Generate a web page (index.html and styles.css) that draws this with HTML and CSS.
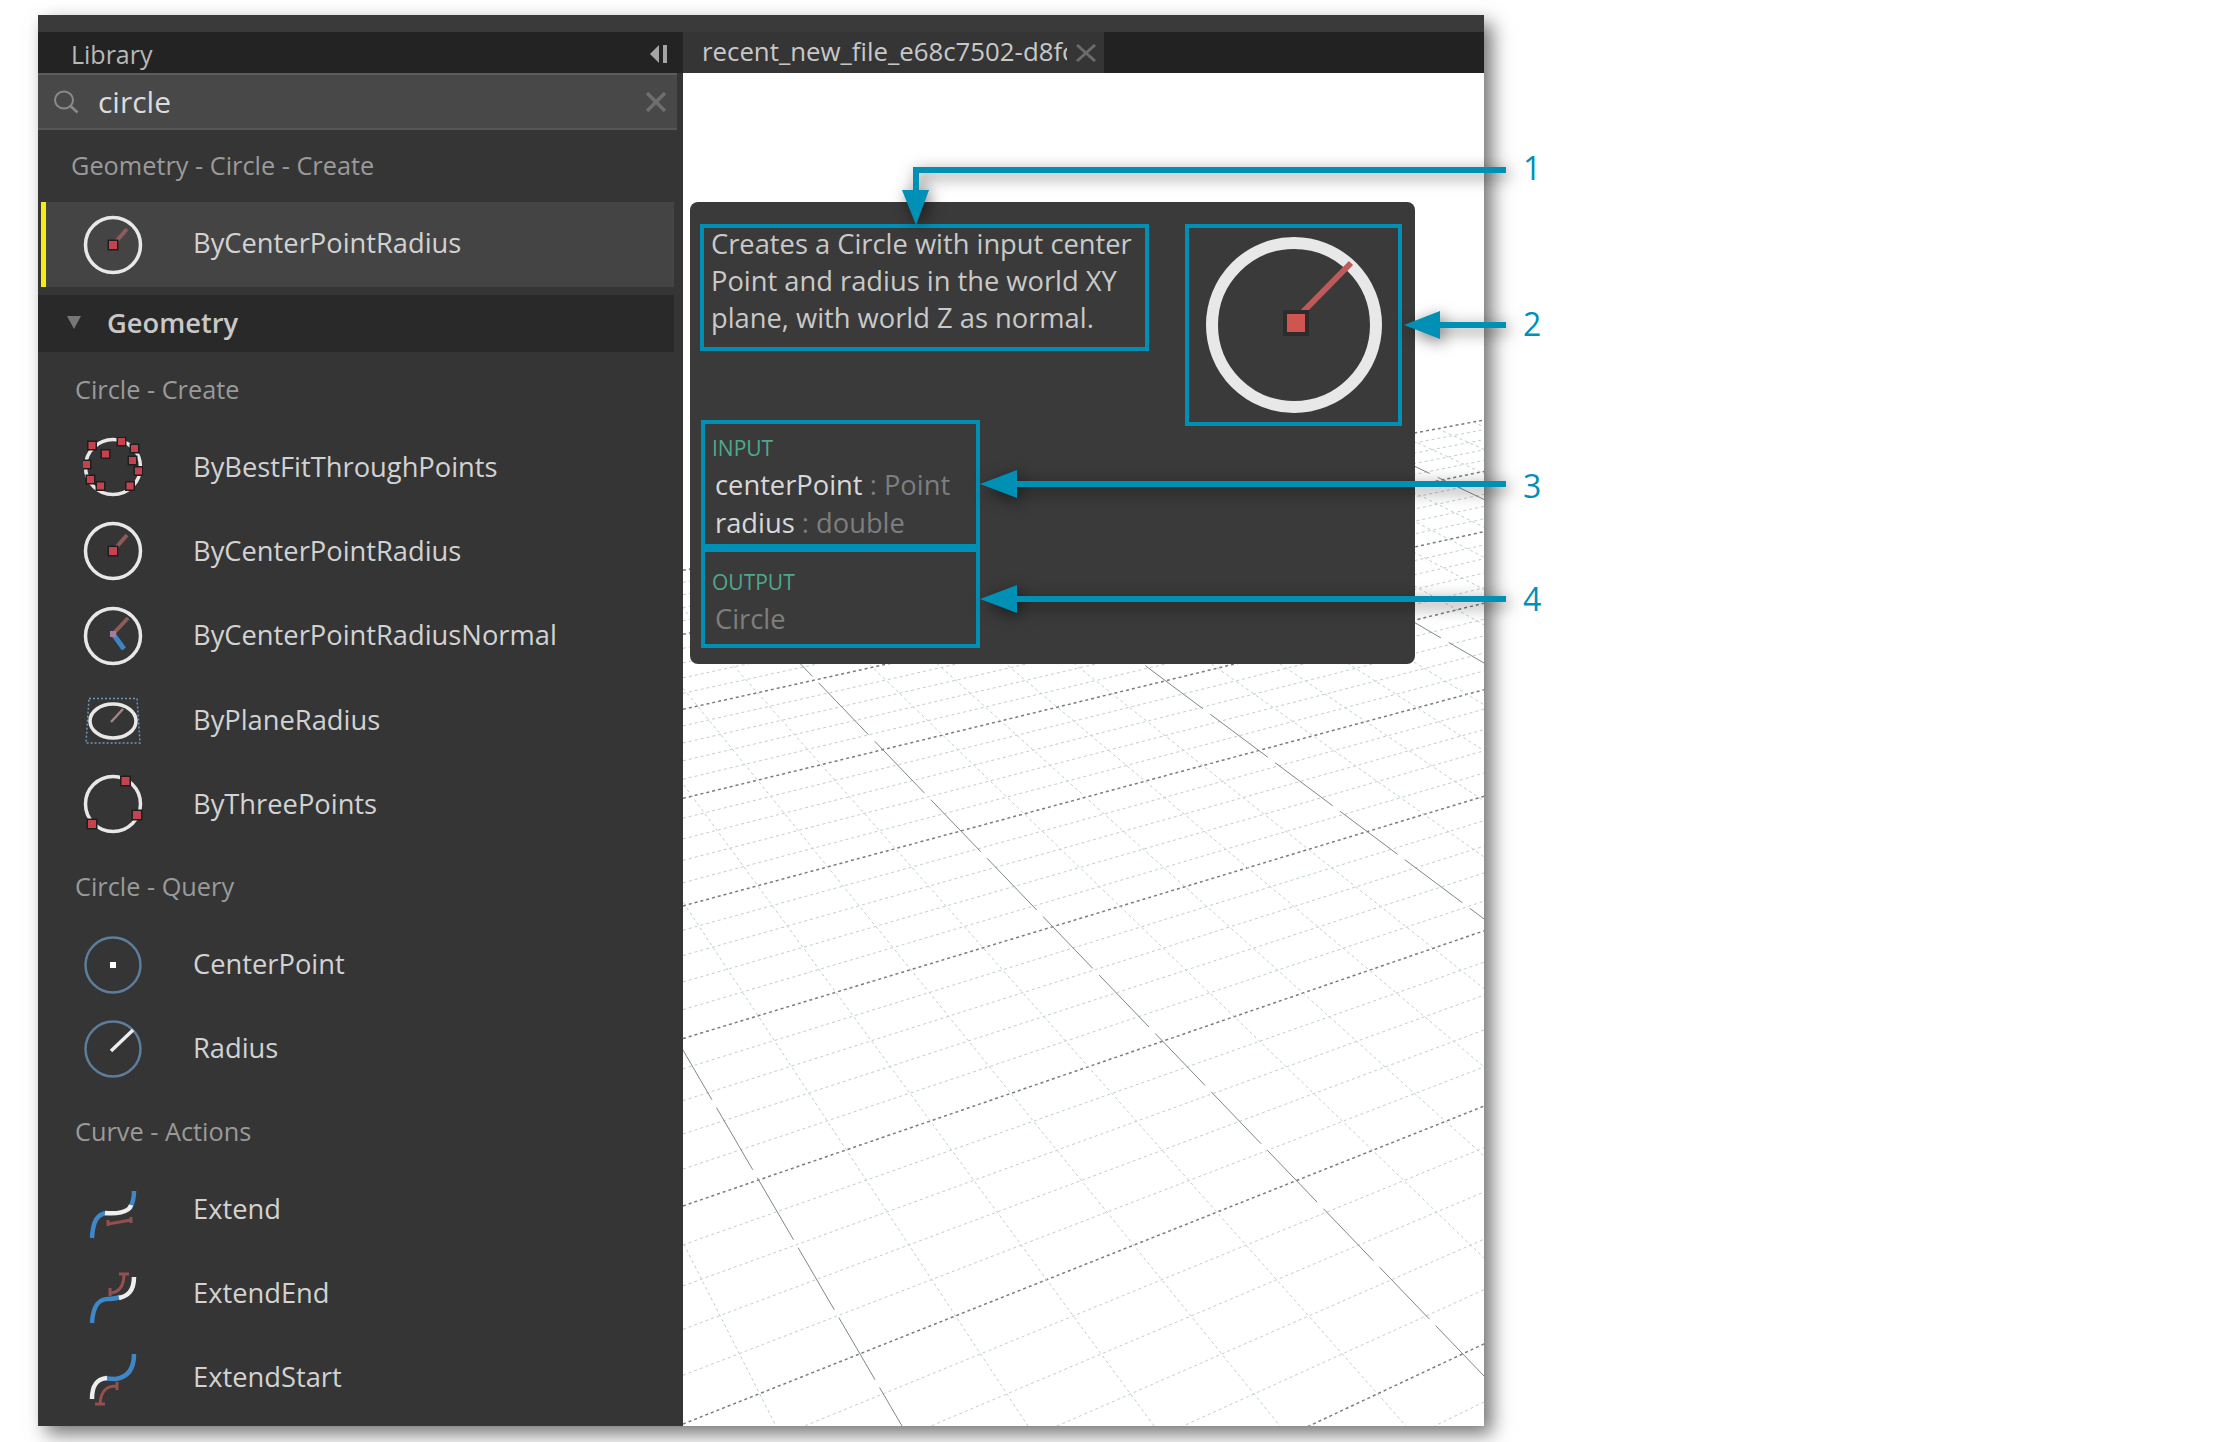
FILE: index.html
```html
<!DOCTYPE html>
<html lang="en">
<head>
    <meta charset="UTF-8">
    <title>Library search tooltip</title>
    <link rel="stylesheet" href="styles.css">
</head>
<body>
    <div class="window">
        <div class="titlebar"></div>
        <div class="panes">
            <aside class="library">
                <div class="library-bar">
                    <span>Library</span>
                    <svg class="collapse" width="20" height="20" viewBox="0 0 20 20"><path d="M11 1v18L2 10z" fill="#a5a5a5"/><rect x="15" y="1" width="4" height="18" fill="#a5a5a5"/></svg>
                </div>
                <div class="search">
                    <svg width="28" height="24" viewBox="0 0 28 24"><ellipse cx="12" cy="10" rx="9" ry="8.5" fill="none" stroke="#8a8a8a" stroke-width="2"/><path d="M18.500 16l7 6.500" stroke="#8a8a8a" stroke-width="2.500"/></svg>
                    <span class="search-text">circle</span>
                    <svg class="search-clear" width="22" height="20" viewBox="0 0 22 20"><path d="M2 1l18 18M20 1L2 19" stroke="#6e6e6e" stroke-width="3.500"/></svg>
                </div>

                <div class="result-label">Geometry - Circle - Create</div>
                <div class="item selected">
                    <svg class="icon" viewBox="0 0 60 60"><circle cx="30" cy="30" r="27.500" class="ring"/><path d="M30 30L44 14" class="arm"/><rect x="26" y="26" width="8" height="8" class="pt"/></svg>
                    <span>ByCenterPointRadius</span>
                </div>

                <div class="category"><i class="caret"></i>Geometry</div>

                <div class="group-label">Circle - Create</div>
                <div class="item">
                    <svg class="icon" viewBox="0 0 60 60">
                        <circle cx="30" cy="30" r="27.500" class="ring"/>
                        <rect x="5.500" y="5" width="7" height="7" class="pt"/><rect x="19" y="13.500" width="7" height="7" class="pt"/><rect x="35" y="1" width="7" height="7" class="pt"/><rect x="48" y="8" width="7" height="7" class="pt"/><rect x="46" y="20" width="7" height="7" class="pt"/><rect x="52" y="30.500" width="7" height="7" class="pt"/><rect x="0" y="24" width="7" height="7" class="pt"/><rect x="4" y="39" width="7" height="7" class="pt"/><rect x="14" y="45.500" width="7" height="7" class="pt"/><rect x="43.500" y="45.500" width="7" height="7" class="pt"/>
                    </svg>
                    <span>ByBestFitThroughPoints</span>
                </div>
                <div class="item">
                    <svg class="icon" viewBox="0 0 60 60"><circle cx="30" cy="30" r="27.500" class="ring"/><path d="M30 30L44 14" class="arm"/><rect x="26" y="26" width="8" height="8" class="pt"/></svg>
                    <span>ByCenterPointRadius</span>
                </div>
                <div class="item">
                    <svg class="icon" viewBox="0 0 60 60"><circle cx="30" cy="30" r="27.500" class="ring"/><path d="M30 28L45 12" class="arm"/><path d="M30 28L41 43" class="arm-blue"/><rect x="27" y="25" width="6" height="6" fill="#a87ba0"/></svg>
                    <span>ByCenterPointRadiusNormal</span>
                </div>
                <div class="item">
                    <svg class="icon" viewBox="0 0 60 60"><path d="M6 8.500H54L57 53H3z" class="plane"/><ellipse cx="30" cy="31" rx="23" ry="17" class="ring"/><path d="M28 32L40 19" class="arm-pale"/></svg>
                    <span>ByPlaneRadius</span>
                </div>
                <div class="item">
                    <svg class="icon" viewBox="0 0 60 60"><circle cx="30" cy="30" r="27.500" class="ring"/><rect x="38.500" y="3" width="8" height="8" class="pt"/><rect x="50" y="37" width="8" height="8" class="pt"/><rect x="5" y="46" width="8" height="8" class="pt"/></svg>
                    <span>ByThreePoints</span>
                </div>

                <div class="group-label">Circle - Query</div>
                <div class="item">
                    <svg class="icon" viewBox="0 0 60 60"><circle cx="30" cy="30" r="27.500" class="ring-blue"/><rect x="27" y="27" width="6" height="6" fill="#fff"/></svg>
                    <span>CenterPoint</span>
                </div>
                <div class="item">
                    <svg class="icon" viewBox="0 0 60 60"><circle cx="30" cy="30" r="27.500" class="ring-blue"/><path d="M28 32L50 11" stroke="#eee" stroke-width="3.500"/></svg>
                    <span>Radius</span>
                </div>

                <div class="group-label">Curve - Actions</div>
                <div class="item">
                    <svg class="icon" viewBox="0 0 60 60"><path d="M9 59C10 42 14 35 24 34" class="curve-blue"/><path d="M47 29C50 24 51 18 51 12" class="curve-blue"/><path d="M22 34C32 35 46 34 48 26" class="curve-white"/><path d="M25 45L48 41M25 41v6M48 38v6" class="bracket"/></svg>
                    <span>Extend</span>
                </div>
                <div class="item">
                    <svg class="icon" viewBox="0 0 60 60"><path d="M9 59C10 42 15 35 25 35C30 35 34 34 38 33" class="curve-blue"/><path d="M36 34C44 32 51 28 51 13" class="curve-white"/><path d="M28 29C36 28 41 22 41 10M36 10h10M27 24v8" class="bracket"/></svg>
                    <span>ExtendEnd</span>
                </div>
                <div class="item">
                    <svg class="icon" viewBox="0 0 60 60"><path d="M51 6C51 20 45 29 33 31C29 31 26 31 22 30" class="curve-blue"/><path d="M24 30C13 31 9 38 9 51" class="curve-white"/><path d="M34 38C24 38 18 42 17 56M12 56h10M34 34v8" class="bracket"/></svg>
                    <span>ExtendStart</span>
                </div>
            </aside>

            <main class="workspace">
                <div class="tabbar">
                    <div class="tab">
                        <span class="tab-name">recent_new_file_e68c7502-d8fc</span>
                        <svg width="20" height="18" viewBox="0 0 20 18"><path d="M1 1l18 16M19 1L1 17" stroke="#6a6a6a" stroke-width="3"/></svg>
                    </div>
                </div>
                <div class="viewport">
                    <svg id="grid" class="grid" viewBox="683 73 801 1353"></svg>

                    <div class="tooltip">
                        <div class="tooltip-left">
                            <div class="box desc">
                                <p>Creates a Circle with input center Point and radius in the world XY plane, with world Z as normal.</p>
                            </div>
                            <div class="box ports inputs">
                                <div class="port-title">INPUT</div>
                                <div class="port">centerPoint <em>: Point</em></div>
                                <div class="port">radius <em>: double</em></div>
                            </div>
                            <div class="box ports outputs">
                                <div class="port-title">OUTPUT</div>
                                <div class="port"><em>Circle</em></div>
                            </div>
                        </div>
                        <div class="box preview">
                            <svg width="180" height="180" viewBox="0 0 180 180"><circle cx="90" cy="90" r="82" fill="none" stroke="#e8e8e8" stroke-width="12"/><path d="M92 84L147 28" stroke="#c05a5a" stroke-width="6"/><rect x="79" y="75" width="26" height="26" fill="#2c2c2c"/><rect x="83" y="79" width="18" height="18" fill="#cf5550"/></svg>
                        </div>
                    </div>
                </div>
            </main>
        </div>
    </div>

    <svg class="callouts" width="2218" height="1442" viewBox="0 0 2218 1442">
        <g class="leaders">
            <path d="M916 197V170H1506" class="leader"/>
            <path d="M902 190H929L916 225z" class="head"/>
            <path d="M1436 325H1506" class="leader"/>
            <path d="M1404 325L1440 311V339z" class="head"/>
            <path d="M1012 484H1506" class="leader"/>
            <path d="M980 484L1017 470V498z" class="head"/>
            <path d="M1012 599H1506" class="leader"/>
            <path d="M980 599L1017 585V613z" class="head"/>
        </g>
        <text x="1523" y="180">1</text>
        <text x="1523" y="336">2</text>
        <text x="1523" y="498">3</text>
        <text x="1523" y="611">4</text>
    </svg>

    <script src="grid.js"></script>
</body>
</html>
```

FILE: styles.css
```css
body {
    margin: 0;
    width: 2218px;
    height: 1442px;
    overflow: hidden;
    background: #fff;
    font-family: "Open Sans", sans-serif;
    position: relative;
}
.window {
    position: absolute;
    left: 38px;
    top: 15px;
    width: 1446px;
    height: 1411px;
    display: flex;
    flex-direction: column;
    background: #3a3a3a;
    box-shadow: 8px 8px 18px rgba(0, 0, 0, 0.55);
}
.titlebar {
    height: 17px;
    flex: none;
}
.panes {
    flex: 1;
    display: flex;
    min-height: 0;
}

/* library */
.library {
    width: 645px;
    flex: none;
    background: #353535;
    color: #cfcfcf;
}
.library-bar {
    height: 41px;
    background: #232323;
    display: flex;
    align-items: center;
    justify-content: space-between;
    padding: 2px 15px 0 33px;
    font-size: 25px;
    color: #b8b8b8;
    box-sizing: border-box;
}
.search {
    height: 57px;
    width: 639px;
    box-sizing: border-box;
    background: #484848;
    border-top: 2px solid #5c5c5c;
    border-bottom: 2px solid #565656;
    display: flex;
    align-items: center;
    padding: 0 10px 0 14px;
}
.search-text {
    font-size: 30px;
    color: #dcdcdc;
    margin-left: 18px;
    flex: 1;
}
.result-label {
    height: 72px;
    line-height: 70px;
    padding-left: 33px;
    font-size: 25.300px;
    color: #9a9a9a;
}
.item {
    height: 84.300px;
    display: flex;
    align-items: center;
    font-size: 27.300px;
    line-height: 36px;
    color: #d2d2d2;
    padding-left: 45px;
    box-sizing: border-box;
}
.item span {
    margin-left: 50px;
    margin-bottom: 1px;
}
.selected {
    height: 85px;
    width: 633px;
    margin-left: 3px;
    background: #444;
    border-left: 5px solid #f2ee10;
    padding-left: 37px;
}
.selected span {
    margin-bottom: 3px;
}
.category {
    margin-top: 8px;
    height: 57px;
    width: 636px;
    background: #292929;
    display: flex;
    align-items: center;
    font-size: 27.300px;
    font-weight: 600;
    color: #c8c8c8;
    padding-left: 29px;
    padding-bottom: 2px;
    box-sizing: border-box;
}
.caret {
    width: 0;
    height: 0;
    border-left: 7px solid transparent;
    border-right: 7px solid transparent;
    border-top: 13px solid #777;
    margin-right: 26px;
}
.group-label {
    height: 73px;
    line-height: 74px;
    padding-left: 37px;
    font-size: 25.300px;
    color: #9a9a9a;
}
.item + .group-label {
    height: 76px;
    line-height: 80px;
}

/* icons */
.icon {
    width: 60px;
    height: 60px;
    flex: none;
}
.ring {
    fill: none;
    stroke: #e8e8e8;
    stroke-width: 3.5;
}
.ring-blue {
    fill: none;
    stroke: #5d7d9c;
    stroke-width: 2.5;
}
.arm {
    stroke: #8f5a5a;
    stroke-width: 4;
}
.arm-blue {
    stroke: #3f85c0;
    stroke-width: 5;
}
.arm-pale {
    stroke: #a58684;
    stroke-width: 2.5;
}
.pt {
    fill: #c4434f;
    stroke: #1e1e1e;
    stroke-width: 3;
    paint-order: stroke;
}
.plane {
    fill: none;
    stroke: #6f96b8;
    stroke-width: 1.5;
    stroke-dasharray: 2 2;
}
.curve-blue {
    fill: none;
    stroke: #3f88c8;
    stroke-width: 4.5;
}
.curve-white {
    fill: none;
    stroke: #eee;
    stroke-width: 4.5;
}
.bracket {
    fill: none;
    stroke: #94504f;
    stroke-width: 3;
}

/* workspace */
.workspace {
    flex: 1;
    display: flex;
    flex-direction: column;
    min-width: 0;
}
.tabbar {
    height: 41px;
    flex: none;
    background: #222;
    display: flex;
}
.tab {
    width: 421px;
    box-sizing: border-box;
    background: #353535;
    display: flex;
    align-items: center;
    padding-left: 19px;
}
.tab-name {
    width: 365px;
    margin-right: 9px;
    margin-bottom: 3px;
    overflow: hidden;
    white-space: nowrap;
    font-size: 25.800px;
    color: #c8c8c8;
}
.viewport {
    flex: 1;
    position: relative;
    background: #fff;
    overflow: hidden;
}
.grid {
    position: absolute;
    left: 0;
    top: 0;
    width: 801px;
    height: 1353px;
}
.minor {
    stroke: #bfced2;
    stroke-width: 1;
    stroke-dasharray: 3 3;
}
.major-a {
    stroke: #777d80;
    stroke-width: 1.5;
    stroke-dasharray: 3 3;
}
.major-b {
    stroke: #80878a;
    stroke-width: 1;
    stroke-dasharray: 72 9;
}

/* tooltip */
.tooltip {
    position: absolute;
    left: 7px;
    top: 129px;
    width: 725px;
    height: 462px;
    box-sizing: border-box;
    padding: 22px 13px 0 11px;
    display: flex;
    justify-content: space-between;
    align-items: flex-start;
    background: #3a3a3a;
    border-radius: 8px;
    color: #c9c9c9;
    font-size: 27.300px;
}
.tooltip-left {
    width: 448px;
}
.box {
    border: 4px solid #0090b5;
    box-sizing: border-box;
}
.desc {
    height: 127px;
    padding: 0 7px;
    line-height: 37px;
    margin-bottom: 69px;
    margin-left: -1px;
}
.desc p {
    margin: -3px 0 0;
}
.ports {
    width: 279px;
    padding-left: 10px;
}
.inputs {
    height: 128px;
    padding-top: 11px;
}
.outputs {
    height: 100px;
    padding-top: 17px;
}
.port-title {
    font-size: 21px;
    line-height: 26px;
    margin-left: -3px;
    margin-bottom: 5px;
    color: #4fa88d;
}
.port {
    line-height: 38px;
    color: #d8d8d8;
}
.outputs .port {
    margin-top: 1px;
}
.port em {
    font-style: normal;
    color: #7e7e7e;
}
.preview {
    width: 217px;
    height: 202px;
    display: flex;
    align-items: center;
    justify-content: center;
}

/* callouts */
.callouts {
    position: absolute;
    left: 0;
    top: 0;
}
.callouts text {
    font-family: "Open Sans", sans-serif;
    font-size: 32px;
    fill: #0090b5;
}
.leaders {
    filter: drop-shadow(3px 4px 8px rgba(0, 0, 0, 0.55));
}
.leader {
    fill: none;
    stroke: #0090b5;
    stroke-width: 6;
}
.head {
    fill: #0090b5;
}
```

FILE: grid.js
```js
// perspective floor grid: two sets of lines running to their vanishing points
var svg = document.getElementById("grid");
var vpA = { x: 4765, y: -196 };
var vpB = { x: -71, y: -244 };
var leftEdge = 683;
var rightEdge = 1484;
var bottom = 1426;

function edgeY(i) {
    return 1 / (8.757e-4 - 0.1822e-4 * i) - 236;
}

function addLine(x1, y1, x2, y2, cls) {
    var line = document.createElementNS("http://www.w3.org/2000/svg", "line");
    line.setAttribute("x1", x1);
    line.setAttribute("y1", y1);
    line.setAttribute("x2", x2);
    line.setAttribute("y2", y2);
    line.setAttribute("class", cls);
    svg.appendChild(line);
}

var farY = edgeY(-20);
var farSlope = (vpA.y - farY) / (vpA.x - leftEdge);

for (var i = -20; i <= 25; i++) {
    var y0 = edgeY(i);
    var slope = (vpA.y - y0) / (vpA.x - leftEdge);
    addLine(leftEdge, y0, rightEdge, y0 + slope * (rightEdge - leftEdge), i % 5 === 0 ? "major-a" : "minor");
}

for (var j = -1; j <= 24; j++) {
    var footX = 902 + 126 * j;
    var s = (bottom - vpB.y) / (footX - vpB.x);
    // where this line meets the far edge of the grid
    var startX = (farY - farSlope * leftEdge - vpB.y + s * vpB.x) / (s - farSlope);
    var startY = vpB.y + s * (startX - vpB.x);
    addLine(startX, startY, footX, bottom, j % 5 === 0 ? "major-b" : "minor");
}
```
